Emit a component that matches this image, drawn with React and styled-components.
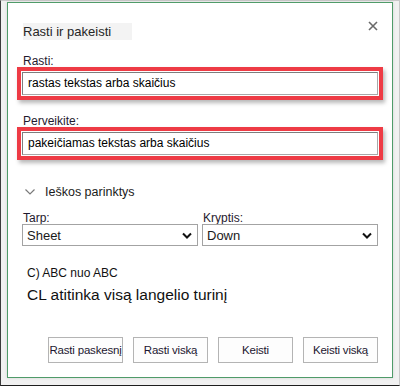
import styled, { createGlobalStyle } from "styled-components";

const Global = createGlobalStyle`
    html, body {
        margin: 0;
        padding: 0;
        background: #ffffff;
    }
    * {
        box-sizing: border-box;
    }
`;

const Page = styled.div`
    width: 400px;
    height: 386px;
    padding: 1px 6px 7px 6px;
    background: #f1f1f1;
    border: 1px solid #c9c9c9;
    border-left-color: #3c3c3c;
    border-bottom-color: #1e1e1e;
    font-family: "Liberation Sans", Arial, sans-serif;
    color: #1b1b1b;
`;

const Dialog = styled.div`
    height: 100%;
    display: flex;
    flex-direction: column;
    padding: 20px 14px 14px 14px;
    background: #ffffff;
    border: 1px solid #4f9b69;
    box-shadow: 0 0 3px rgba(0, 0, 0, 0.12);
`;

const Header = styled.div`
    display: flex;
    justify-content: space-between;
    align-items: flex-start;
    margin-left: 1px;
`;

const Title = styled.div`
    width: 109px;
    height: 17px;
    line-height: 17px;
    font-size: 13px;
    color: #262626;
    background: #f3f3f3;
`;

const Close = styled.svg`
    width: 10px;
    height: 10px;
    margin-top: -2px;
`;

const Label = styled.div`
    font-size: 12px;
    line-height: 12px;
    margin-left: 1px;
    margin-top: ${(p) => p.$top || 0}px;
    color: #1f1a2e;
`;

const Highlight = styled.div`
    margin: 0 -5px;
    padding: 1px;
    border: 4px solid #ee3b45;
    box-shadow: 2px 3px 4px rgba(0, 0, 0, 0.28);
`;

const Input = styled.div`
    height: 23px;
    line-height: 21px;
    padding: 0 5px;
    font-size: 12px;
    color: #000;
    border: 1px solid #7d7d7d;
    border-bottom-color: #a8a8a8;
    border-right-color: #a8a8a8;
    background: #fff;
`;

const Toggle = styled.div`
    display: flex;
    align-items: center;
    gap: 10px;
    margin-top: 24px;
    margin-left: 3px;
    height: 16px;
    font-size: 12.5px;
`;

const Chevron = styled.svg`
    width: 10px;
    height: 6px;
`;

const Grid = styled.div`
    display: grid;
    grid-template-columns: 1fr 1fr;
    gap: 0 4px;
    margin-top: 12px;
`;

const Field = styled.div`
    display: flex;
    flex-direction: column;
`;

const Select = styled.div`
    display: flex;
    align-items: center;
    justify-content: space-between;
    height: 22px;
    padding: 0 5px 0 4px;
    font-size: 13px;
    color: #1a1a1a;
    border: 1px solid #a3a3a3;
    background: #fff;
`;

const Caret = styled.svg`
    width: 10px;
    height: 7px;
`;

const Small = styled.div`
    margin-top: 20px;
    margin-left: 5px;
    font-size: 12px;
    line-height: 15px;
    color: #111;
`;

const Big = styled.div`
    margin-top: 4px;
    margin-left: 5px;
    font-size: 15.5px;
    line-height: 20px;
    color: #111;
`;

const Buttons = styled.div`
    display: flex;
    justify-content: flex-end;
    gap: 10px;
    margin-top: auto;
`;

const Button = styled.div`
    width: 75px;
    height: 26px;
    display: flex;
    align-items: center;
    justify-content: center;
    font-size: 11.5px;
    letter-spacing: -0.2px;
    color: #1c1730;
    white-space: nowrap;
    background: #fdfdfd;
    border: 1px solid #b4b4b4;
`;

function DropDown({ value }) {
    return (
        <Select>
            <span>{value}</span>
            <Caret viewBox="0 0 10 7">
                <polyline points="1,1.5 5,5.5 9,1.5" fill="none" stroke="#111" strokeWidth="2" />
            </Caret>
        </Select>
    );
}

export default function App() {
    return (
        <>
            <Global />
            <Page>
                <Dialog>
                    <Header>
                        <Title>Rasti ir pakeisti</Title>
                        <Close viewBox="0 0 10 10">
                            <path d="M1 1 L9 9 M9 1 L1 9" stroke="#6a6a6a" strokeWidth="1.6" />
                        </Close>
                    </Header>

                    <Label $top={15}>Rasti:</Label>
                    <Highlight>
                        <Input>rastas tekstas arba skaičius</Input>
                    </Highlight>

                    <Label $top={15}>Perveikite:</Label>
                    <Highlight>
                        <Input>pakeičiamas tekstas arba skaičius</Input>
                    </Highlight>

                    <Toggle>
                        <Chevron viewBox="0 0 10 6">
                            <polyline points="0.5,0.5 5,5 9.5,0.5" fill="none" stroke="#7a7a7a" strokeWidth="1.2" />
                        </Chevron>
                        <span>Ieškos parinktys</span>
                    </Toggle>

                    <Grid>
                        <Field>
                            <Label>Tarp:</Label>
                            <DropDown value="Sheet" />
                        </Field>
                        <Field>
                            <Label>Kryptis:</Label>
                            <DropDown value="Down" />
                        </Field>
                    </Grid>

                    <Small>C) ABC nuo ABC</Small>
                    <Big>CL atitinka visą langelio turinį</Big>

                    <Buttons>
                        <Button>Rasti paskesnį</Button>
                        <Button>Rasti viską</Button>
                        <Button>Keisti</Button>
                        <Button>Keisti viską</Button>
                    </Buttons>
                </Dialog>
            </Page>
        </>
    );
}
